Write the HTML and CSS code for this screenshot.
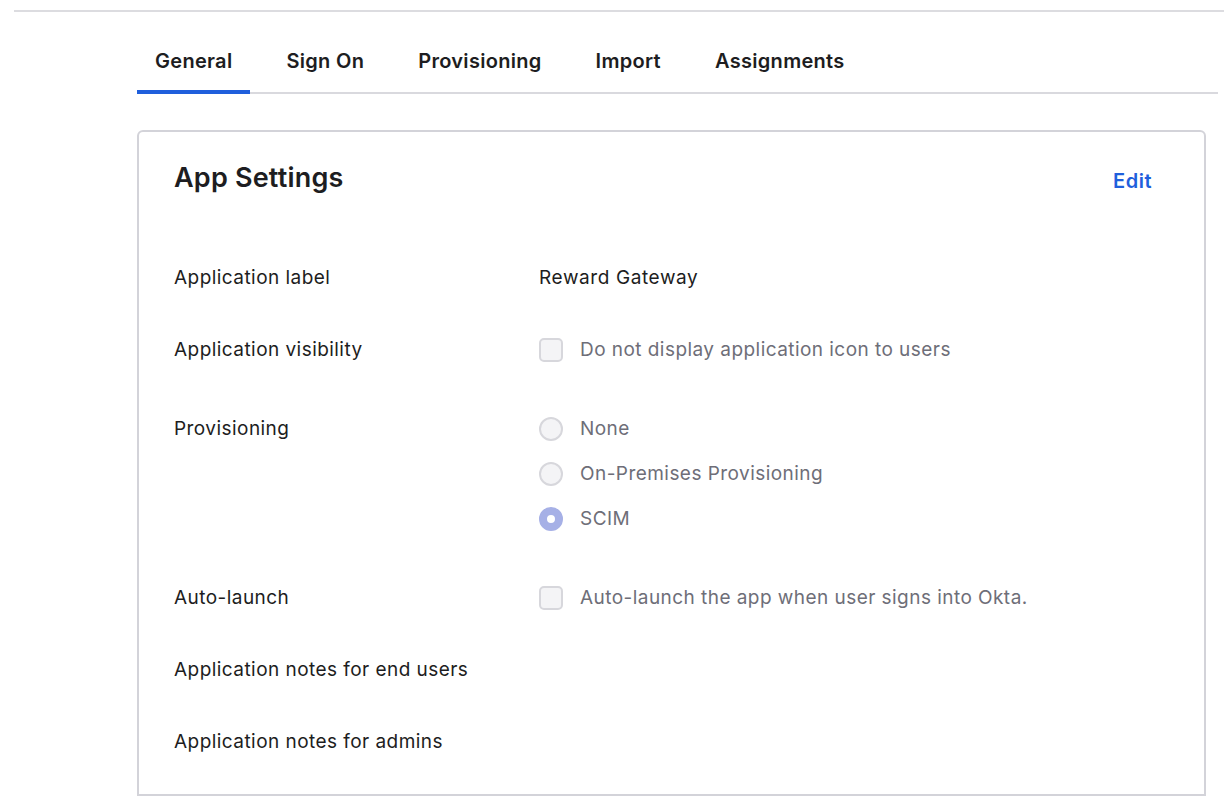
FILE: index.html
```html
<!DOCTYPE html>
<html lang="en">
<head>
<meta charset="utf-8">
<title>App Settings</title>
<link rel="stylesheet" href="styles.css">
</head>
<body>
<div class="topline"></div>
<main class="main">
  <nav class="tabs">
    <a class="tab active">General</a>
    <a class="tab">Sign On</a>
    <a class="tab">Provisioning</a>
    <a class="tab">Import</a>
    <a class="tab">Assignments</a>
  </nav>
  <section class="card">
    <header class="card-head">
      <h2 class="card-title">App Settings</h2>
      <a class="edit">Edit</a>
    </header>
    <div class="rows">
      <div class="row">
        <div class="label">Application label</div>
        <div class="value">Reward Gateway</div>
      </div>
      <div class="row">
        <div class="label">Application visibility</div>
        <div class="value">
          <label class="option"><span class="checkbox"></span><span class="opt-text">Do not display application icon to users</span></label>
        </div>
      </div>
      <div class="row row-wide">
        <div class="label">Provisioning</div>
        <div class="value options">
          <label class="option"><span class="radio"></span><span class="opt-text">None</span></label>
          <label class="option"><span class="radio"></span><span class="opt-text">On-Premises Provisioning</span></label>
          <label class="option"><span class="radio checked"></span><span class="opt-text">SCIM</span></label>
        </div>
      </div>
      <div class="row row-wide">
        <div class="label">Auto-launch</div>
        <div class="value">
          <label class="option"><span class="checkbox"></span><span class="opt-text">Auto-launch the app when user signs into Okta.</span></label>
        </div>
      </div>
      <div class="row">
        <div class="label">Application notes for end users</div>
        <div class="value"></div>
      </div>
      <div class="row">
        <div class="label">Application notes for admins</div>
        <div class="value"></div>
      </div>
    </div>
  </section>
</main>
</body>
</html>
```

FILE: styles.css
```css
* { box-sizing: border-box; }

html, body {
  margin: 0;
  padding: 0;
  background: #ffffff;
}

body {
  font-family: Inter, "Noto Sans", "Liberation Sans", sans-serif;
  color: #1d1d21;
  overflow: hidden;
}

.topline {
  height: 2px;
  margin: 10px 0 0 14px;
  background: #dcdce0;
}

.main {
  padding-left: 137px;
}

.tabs {
  display: flex;
  gap: 18px;
  margin: 37px 6px 0 0;
  border-bottom: 2px solid #d9d9de;
}

.tab {
  display: block;
  padding: 0 18px 17px;
  margin-bottom: -2px;
  font-size: 20px;
  line-height: 24px;
  font-weight: 600;
  color: #1d1d21;
  border-bottom: 4px solid transparent;
  letter-spacing: 0.3px;
}

.tab.active {
  border-bottom-color: #1f5fdc;
}

.card {
  margin: 36px 18px 0 0;
  border: 2px solid #d3d3d9;
  border-radius: 6px 6px 0 0;
  padding: 30px 52px 39px 35px;
  height: 666px;
}

.card-head {
  display: flex;
  justify-content: space-between;
  align-items: center;
}

.card-title {
  margin: 0;
  font-size: 27px;
  line-height: 32px;
  font-weight: 600;
  color: #1d1d21;
  letter-spacing: 0.2px;
}

.edit {
  font-size: 20px;
  line-height: 24px;
  font-weight: 600;
  color: #1f5fdc;
  margin-top: 6px;
  letter-spacing: 0.5px;
}

.rows {
  margin-top: 71px;
  display: flex;
  flex-direction: column;
}

.row {
  display: grid;
  grid-template-columns: 365px 1fr;
  margin-top: 46px;
  font-size: 19px;
  line-height: 26px;
  letter-spacing: 0.45px;
}

.row:first-child { margin-top: 0; }
.row.row-wide { margin-top: 53px; }

.label { color: #1d1d21; }
.value { color: #1d1d21; letter-spacing: 0.6px; }

.options {
  display: flex;
  flex-direction: column;
  gap: 19px;
}

.option {
  display: flex;
  align-items: center;
  gap: 17px;
}

.opt-text { color: #6e6e78; letter-spacing: 0.45px; }

.checkbox {
  width: 24px;
  height: 24px;
  flex: none;
  border: 2px solid #d7d7dc;
  border-radius: 5px;
  background: #f4f4f6;
}

.radio {
  width: 24px;
  height: 24px;
  flex: none;
  border: 2px solid #d7d7dc;
  border-radius: 50%;
  background: #f4f4f6;
}

.radio.checked {
  border: 8px solid #a6b0e6;
  background: #ffffff;
}
```
